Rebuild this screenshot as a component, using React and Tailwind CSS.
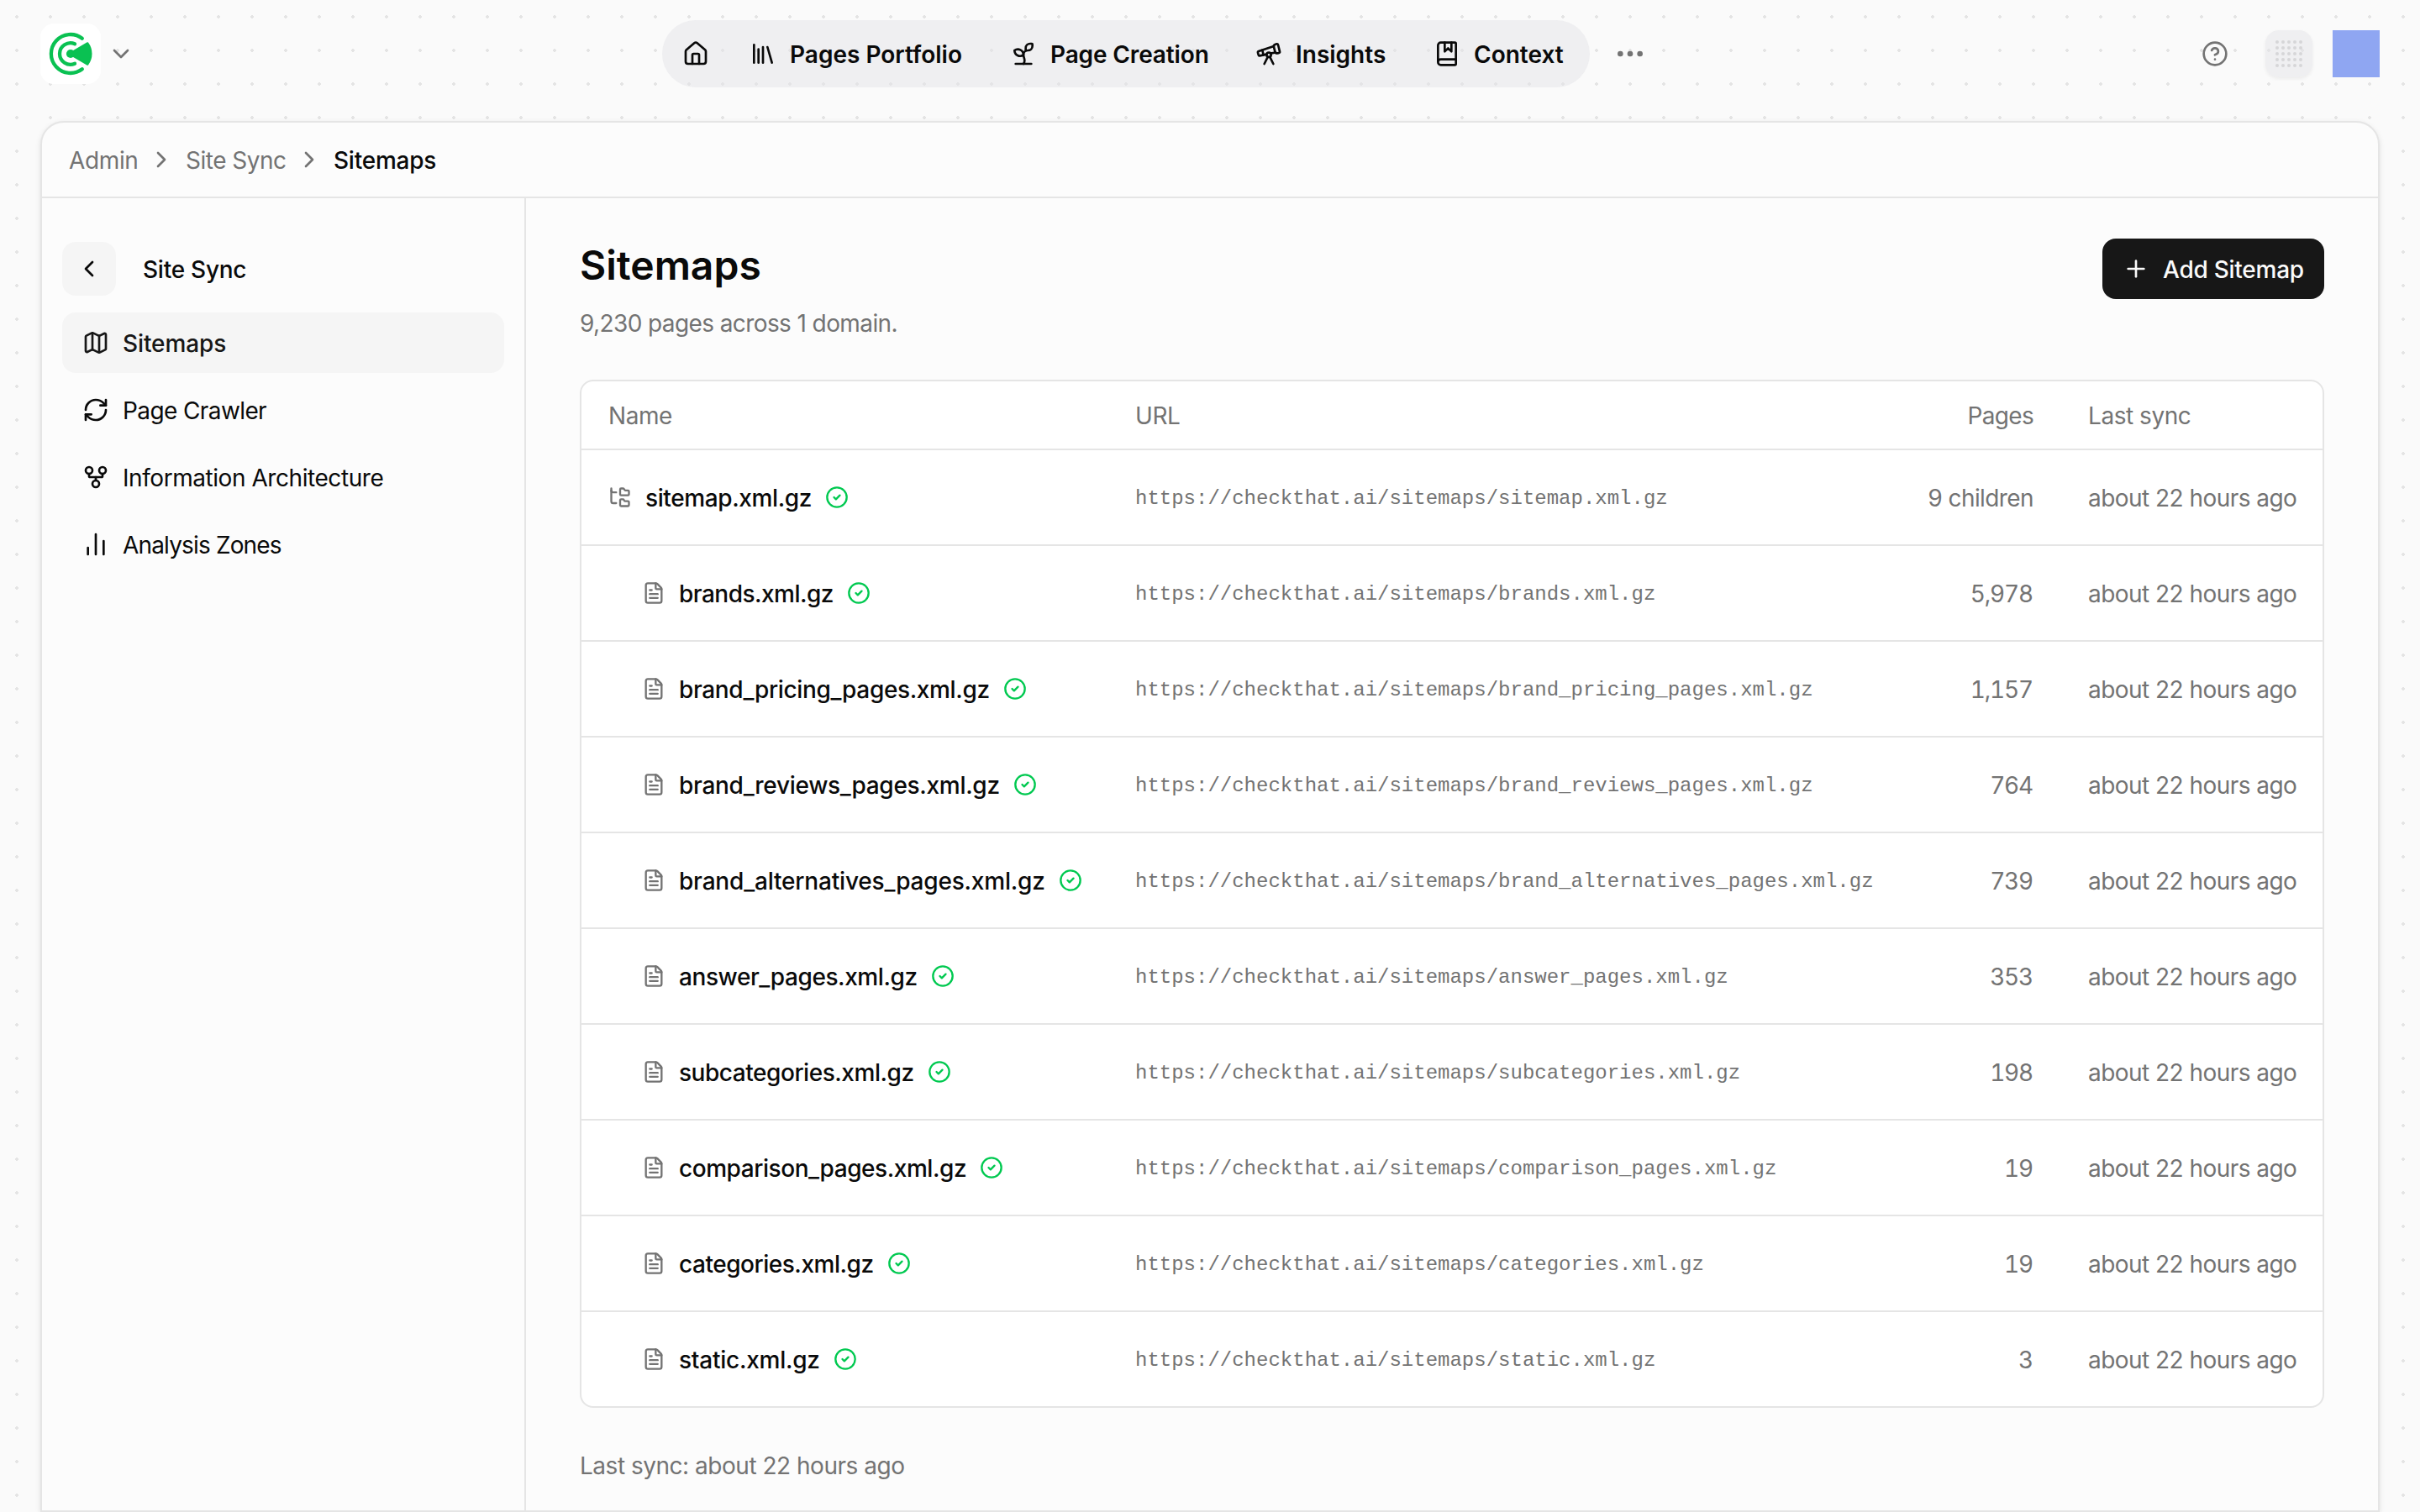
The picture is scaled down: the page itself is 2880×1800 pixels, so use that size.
import {
  BookMarked,
  ChartNoAxesColumn,
  ChevronDown,
  ChevronLeft,
  ChevronRight,
  CircleCheck,
  CircleQuestionMark,
  Ellipsis,
  FileText,
  FolderTree,
  GitFork,
  House,
  Library,
  Map,
  Plus,
  RefreshCw,
  Sprout,
  Telescope,
} from 'lucide-react'

const navItems = [
  { label: 'Pages Portfolio', icon: Library, width: 'w-[310px]' },
  { label: 'Page Creation', icon: Sprout, width: 'w-[292px] tracking-[-0.14px]' },
  { label: 'Insights', icon: Telescope, width: 'w-[212px]' },
  { label: 'Context', icon: BookMarked, width: 'w-[186px]' },
]

const sideItems = [
  { label: 'Sitemaps', icon: Map, active: true, tracking: 'tracking-[-0.1px]' },
  { label: 'Page Crawler', icon: RefreshCw, tracking: 'tracking-[-0.6px]' },
  { label: 'Information Architecture', icon: GitFork, tracking: 'tracking-[-0.44px]' },
  { label: 'Analysis Zones', icon: ChartNoAxesColumn, tracking: 'tracking-[-0.84px]' },
]

const sitemaps = [
  { file: 'sitemap.xml.gz', pages: '9 children', root: true, tracking: 'tracking-[-0.39px]' },
  { file: 'brands.xml.gz', pages: '5,978', tracking: 'tracking-[-0.52px]' },
  { file: 'brand_pricing_pages.xml.gz', pages: '1,157', tracking: 'tracking-[-0.35px]' },
  { file: 'brand_reviews_pages.xml.gz', pages: '764', tracking: 'tracking-[-0.3px]' },
  { file: 'brand_alternatives_pages.xml.gz', pages: '739', tracking: 'tracking-[-0.19px]' },
  { file: 'answer_pages.xml.gz', pages: '353', tracking: 'tracking-[-0.42px]' },
  { file: 'subcategories.xml.gz', pages: '198', tracking: 'tracking-[-0.46px]' },
  { file: 'comparison_pages.xml.gz', pages: '19', tracking: 'tracking-[-0.44px]' },
  { file: 'categories.xml.gz', pages: '19', tracking: 'tracking-[-0.47px]' },
  { file: 'static.xml.gz', pages: '3', tracking: 'tracking-[-0.24px]' },
]

const columns = 'grid grid-cols-[628px_1fr_200px_312px] items-center'

function Logo() {
  return (
    <svg viewBox="0 0 72 72" className="size-[72px]" fill="none">
      <path
        d="M49.8 17.7A23 23 0 1 0 49.8 54.3"
        stroke="#0ac152"
        strokeWidth="4.3"
        strokeLinecap="round"
      />
      <path
        d="M41 24.3A12.8 12.8 0 1 0 41 47.7"
        stroke="#0ac152"
        strokeWidth="4.3"
        strokeLinecap="round"
      />
      <circle cx="36" cy="36" r="5.1" fill="#0ac152" />
      <path
        d="M37.5 34L56.2 23.2Q60.5 29 60.5 36Q60.5 43 56.2 48.8L37.5 38Z"
        fill="#0ac152"
        stroke="#0ac152"
        strokeWidth="2"
        strokeLinejoin="round"
      />
    </svg>
  )
}

function DotGrid() {
  return (
    <div className="grid size-14 grid-cols-[repeat(5,4px)] place-content-center gap-[3px] rounded-2xl bg-[#e4e4e7]/50 shadow-[0_2px_4px_rgba(0,0,0,0.06)]">
      {Array.from({ length: 25 }, (_, i) => (
        <span key={i} className="size-1 rounded-full bg-[#d6d6d8]" />
      ))}
    </div>
  )
}

function TopBar() {
  return (
    <header className="grid h-36 grid-cols-[740px_1fr_auto] pr-12 pl-12">
      <div className="flex h-32 items-center gap-2">
        <div className="rounded-2xl bg-white">
          <Logo />
        </div>
        <ChevronDown className="size-8 text-[#737373]" />
      </div>

      <div className="flex h-32 items-center">
        <nav className="flex h-20 items-center rounded-full bg-[#e4e4e7]/50 pl-6 font-semibold">
          <House className="mr-12 size-8" />
          {navItems.map(({ label, icon: Icon, width }) => (
            <a key={label} className={`flex items-center gap-4 whitespace-nowrap ${width}`}>
              <Icon className="size-8 shrink-0" />
              <span className="pt-0.5">{label}</span>
            </a>
          ))}
        </nav>
        <Ellipsis className="ml-7 size-10 text-[#737373]" />
      </div>

      <div className="flex h-32 items-center">
        <CircleQuestionMark className="mr-11 size-8 text-[#737373]" />
        <DotGrid />
        <div className="ml-6 size-14 bg-[#8fa6f2]" />
      </div>
    </header>
  )
}

function Breadcrumbs() {
  return (
    <div className="flex h-[90px] items-center border-b-2 border-[#e5e5e5] pl-8 text-[#737373]">
      <span className="w-[94px] pt-0.5 tracking-[-0.35px]">Admin</span>
      <ChevronRight className="mr-[13px] size-8" />
      <span className="w-[131px] pt-0.5 tracking-[-0.5px]">Site Sync</span>
      <ChevronRight className="mr-[13px] size-8" />
      <span className="pt-0.5 font-medium tracking-[-0.23px] text-[#0a0a0a]">Sitemaps</span>
    </div>
  )
}

function Sidebar() {
  return (
    <aside className="w-[576px] shrink-0 border-r-2 border-[#e5e5e5] px-6 pt-[52px]">
      <div className="mb-5 flex items-center gap-8">
        <button type="button" className="grid size-16 place-items-center rounded-2xl bg-[#f5f5f5]">
          <ChevronLeft className="size-8" />
        </button>
        <span className="pt-0.5 font-medium tracking-[-0.25px]">Site Sync</span>
      </div>
      <nav className="flex flex-col gap-2">
        {sideItems.map(({ label, icon: Icon, active, tracking }) => (
          <a
            key={label}
            className={`flex h-[72px] items-center gap-4 rounded-2xl px-6 ${tracking} ${
              active ? 'bg-[#f5f5f5] font-medium text-[#171717]' : ''
            }`}
          >
            <Icon className="size-8" />
            <span className="pt-0.5">{label}</span>
          </a>
        ))}
      </nav>
    </aside>
  )
}

function SitemapRow({ file, pages, root, tracking }) {
  const Icon = root ? FolderTree : FileText
  return (
    <div className={`h-[114px] border-b-2 border-[#e5e5e5] last:h-28 last:border-b-0 ${columns}`}>
      <div className={`flex items-center gap-4 ${root ? 'pl-8' : 'pl-[72px]'}`}>
        <Icon className="size-7 text-[#737373]" />
        <span className={`pt-0.5 font-medium ${tracking}`}>{file}</span>
        <CircleCheck className="size-7 text-[#00c950]" />
      </div>
      <div className="pt-1 pl-[31px] font-['Liberation_Mono',monospace] text-2xl text-[#737373]">
        https://checkthat.ai/sitemaps/{file}
      </div>
      <div
        className={`pt-0.5 text-right text-[#737373] tabular-nums ${
          root ? 'pr-8 tracking-[-0.6px]' : 'pr-[33px] tracking-[-1.2px]'
        }`}
      >
        {pages}
      </div>
      <div className="pt-0.5 pl-[33px] tracking-[-0.54px] text-[#737373]">about 22 hours ago</div>
    </div>
  )
}

function SitemapTable() {
  return (
    <div className="overflow-hidden rounded-2xl border-2 border-[#e5e5e5] bg-white">
      <div className={`h-[82px] border-b-2 border-[#e5e5e5] pt-0.5 tracking-[-0.45px] text-[#737373] ${columns}`}>
        <div className="pl-8">Name</div>
        <div className="pl-[31px]">URL</div>
        <div className="pr-8 text-right tracking-[-0.7px]">Pages</div>
        <div className="pl-[33px]">Last sync</div>
      </div>
      {sitemaps.map((s) => (
        <SitemapRow key={s.file} {...s} />
      ))}
    </div>
  )
}

export default function App() {
  return (
    <div className="flex h-[1800px] w-[2880px] flex-col overflow-hidden bg-[#fafafa] bg-[radial-gradient(circle_at_center,#e4e4e4_2px,transparent_2px)] bg-size-[40px_40px] font-['Inter',sans-serif] text-[28px] leading-10 text-[#0a0a0a]">
      <TopBar />
      <div className="mx-12 flex flex-1 flex-col rounded-t-[28px] border-2 border-[#e5e5e5] bg-[#fcfcfc] shadow-[0_2px_6px_rgba(0,0,0,0.1)]">
        <Breadcrumbs />
        <div className="flex flex-1">
          <Sidebar />
          <main className="flex-1 px-16 pt-12">
            <div className="flex justify-between">
              <div>
                <h1 className="text-5xl leading-[63px] font-semibold">Sitemaps</h1>
                <p className="mt-[18px] tracking-[-0.6px] text-[#737373]">9,230 pages across 1 domain.</p>
              </div>
              <button
                type="button"
                className="flex h-[72px] w-[264px] items-center gap-4 rounded-2xl bg-[#171717] pl-6 font-medium tracking-[-0.25px] whitespace-nowrap text-[#fafafa]"
              >
                <Plus className="size-8" />
                <span className="pt-0.5">Add Sitemap</span>
              </button>
            </div>
            <div className="mt-[47px]">
              <SitemapTable />
            </div>
            <p className="mt-[49px] tracking-[-0.48px] text-[#737373]">Last sync: about 22 hours ago</p>
          </main>
        </div>
      </div>
    </div>
  )
}
